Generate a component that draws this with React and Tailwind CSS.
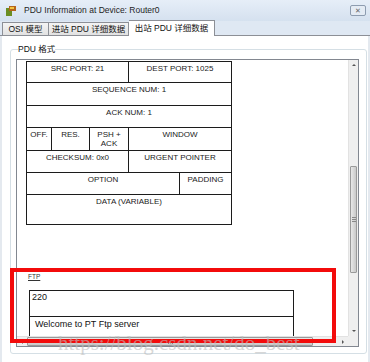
import React from 'react';

const FONT = { fontFamily: '"Liberation Sans", "Noto Sans CJK SC", sans-serif' };

// rows of the TCP header grid: [height, [[width | null, label]]]
const tcpRows = [
  [21, [[102, 'SRC PORT: 21'], [null, 'DEST PORT: 1025']]],
  [23, [[null, 'SEQUENCE NUM: 1']]],
  [22, [[null, 'ACK NUM: 1']]],
  [23, [[25, 'OFF.'], [38, 'RES.'], [39, 'PSH +\nACK'], [null, 'WINDOW']]],
  [22, [[102, 'CHECKSUM: 0x0'], [null, 'URGENT POINTER']]],
  [22, [[153, 'OPTION'], [null, 'PADDING']]],
  [30, [[null, 'DATA (VARIABLE)']]],
];

const WinIcon = () => (
  <svg width="10" height="10" viewBox="0 0 10 10">
    <rect x="0" y="2" width="6" height="8" fill="#6b8e23" />
    <rect x="3" y="0" width="7" height="5" fill="#b5651d" />
    <rect x="4" y="1" width="4" height="2" fill="#f4c542" />
  </svg>
);

const Arrow = ({ dir }) => {
  const pts = {
    up: '1,4 3,2 5,4',
    down: '1,2 3,4 5,2',
    left: '4,1 2,3 4,5',
    right: '2,1 4,3 2,5',
  }[dir];
  return (
    <svg width="6" height="6" viewBox="0 0 6 6">
      <polygon points={pts} fill="#555" />
    </svg>
  );
};

const App = () => {
  return (
    <div className="relative w-[370px] h-[362px] flex flex-col bg-[#dfe8f3] overflow-hidden" style={FONT}>
      {/* title bar */}
      <div className="h-[21px] flex items-center pl-[6px] pr-[4px] bg-gradient-to-b from-[#e6eef8] to-[#d5e1ef]">
        <WinIcon />
        <span className="ml-[8px] text-[8.5px] text-[#1e1e1e]">PDU Information at Device: Router0</span>
        <div className="ml-auto w-[16px] h-[11px] border border-[#8d9cb0] rounded-[2px] bg-[#e4ebf4] flex items-center justify-center text-[7px] leading-none text-[#666]">
          ✕
        </div>
      </div>

      {/* tabs */}
      <div className="h-[15px] flex items-end pl-[2px] border-b border-[#8c8f96]">
        <div className="h-[13px] w-[47px] flex items-center justify-center border border-b-0 border-[#8c8f96] bg-gradient-to-b from-[#f4f4f4] to-[#e2e2e2] text-[8.5px] text-[#111]">
          OSI 模型
        </div>
        <div className="h-[13px] w-[80px] flex items-center justify-center border border-l-0 border-b-0 border-[#8c8f96] bg-gradient-to-b from-[#f4f4f4] to-[#e2e2e2] text-[8.5px] text-[#111]">
          进站 PDU 详细数据
        </div>
        <div className="h-[16px] w-[86px] -mb-[1px] flex items-center justify-center border border-l-0 border-b-0 border-[#8c8f96] bg-white text-[8.5px] text-[#111]">
          出站 PDU 详细数据
        </div>
      </div>

      {/* panel */}
      <div className="flex-1 bg-white pl-[10px] pt-[8px] border-x-[2px] border-[#e4e9ef]">
        <fieldset className="-ml-[2px] w-[357px] h-[310px] border border-[#d5dfe5] rounded-[3px] px-[5px]">
          <legend className="ml-[2px] text-[8.5px] leading-[10px] text-[#111]">PDU 格式</legend>
          <div className="mt-[5px] w-[343px] h-[288px] border border-[#828790] grid grid-cols-[1fr_10px] grid-rows-[1fr_10px]">
            {/* scrolled content */}
            <div className="overflow-hidden pl-[9px] pt-[1px]">
              <div className="w-[206px] border-r border-b border-[#1c1c1c] text-[8px] leading-[9px] text-[#1a1a1a]">
                {tcpRows.map(([h, cells], i) => (
                  <div key={i} className="flex border-t border-[#1c1c1c]" style={{ height: h }}>
                    {cells.map(([w, label], j) => (
                      <div
                        key={j}
                        className={`border-l border-[#1c1c1c] pt-[2px] text-center whitespace-pre-line ${w ? 'shrink-0' : 'flex-1'}`}
                        style={w ? { width: w } : undefined}
                      >
                        {label}
                      </div>
                    ))}
                  </div>
                ))}
              </div>

              <div className="mt-[47px] ml-[2px] text-[6.5px] leading-[9px] underline text-[#333]">FTP</div>
              <div className="mt-[9px] ml-[3px] w-[265px] border-l border-r border-t border-[#1c1c1c] text-[9px] leading-[11px] text-[#111]">
                <div className="h-[25px] px-[2px] pt-[1px]">220</div>
                <div className="h-[30px] border-t border-[#1c1c1c] pl-[5px] pt-[2px]">Welcome to PT Ftp server</div>
              </div>
            </div>

            {/* vertical scrollbar */}
            <div className="flex flex-col bg-[#efefef] border-l border-[#e2e2e2]">
              <div className="h-[10px] flex items-center justify-center">
                <Arrow dir="up" />
              </div>
              <div className="h-[96px]" />
              <div className="h-[107px] mx-[1px] rounded-[1px] border border-[#9a9a9a] bg-gradient-to-r from-[#e8e8e8] to-[#c9c9c9] flex items-center justify-center">
                <div className="w-[4px] h-[5px] border-y border-[#888] flex items-center">
                  <div className="w-full h-px bg-[#888]" />
                </div>
              </div>
              <div className="flex-1" />
              <div className="h-[10px] flex items-center justify-center">
                <Arrow dir="down" />
              </div>
            </div>

            {/* horizontal scrollbar */}
            <div className="flex items-center bg-[#efefef] border-t border-[#e2e2e2]">
              <div className="w-[10px] flex justify-center">
                <Arrow dir="left" />
              </div>
              <div className="w-[286px] h-[9px] rounded-[1px] border border-[#9a9a9a] bg-gradient-to-b from-[#e8e8e8] to-[#c9c9c9] flex items-center justify-center">
                <div className="h-[4px] w-[5px] border-x border-[#888] flex justify-center">
                  <div className="h-full w-px bg-[#888]" />
                </div>
              </div>
              <div className="flex-1" />
              <div className="w-[10px] flex justify-center">
                <Arrow dir="right" />
              </div>
            </div>
            <div className="bg-[#efefef]" />
          </div>
        </fieldset>
      </div>

      {/* red annotation box */}
      <div className="absolute left-[10px] top-[268px] w-[326px] h-[75px] border-[4px] border-[#f30b0b]" />

      {/* watermark */}
      <div
        className="absolute left-[58px] top-[333px] text-[21px] leading-none text-[#bdbdbd] opacity-60 whitespace-nowrap"
        style={{ fontFamily: '"Liberation Serif", serif' }}
      >
        https://blog.csdn.net/do_best
      </div>
    </div>
  );
};

export default App;
